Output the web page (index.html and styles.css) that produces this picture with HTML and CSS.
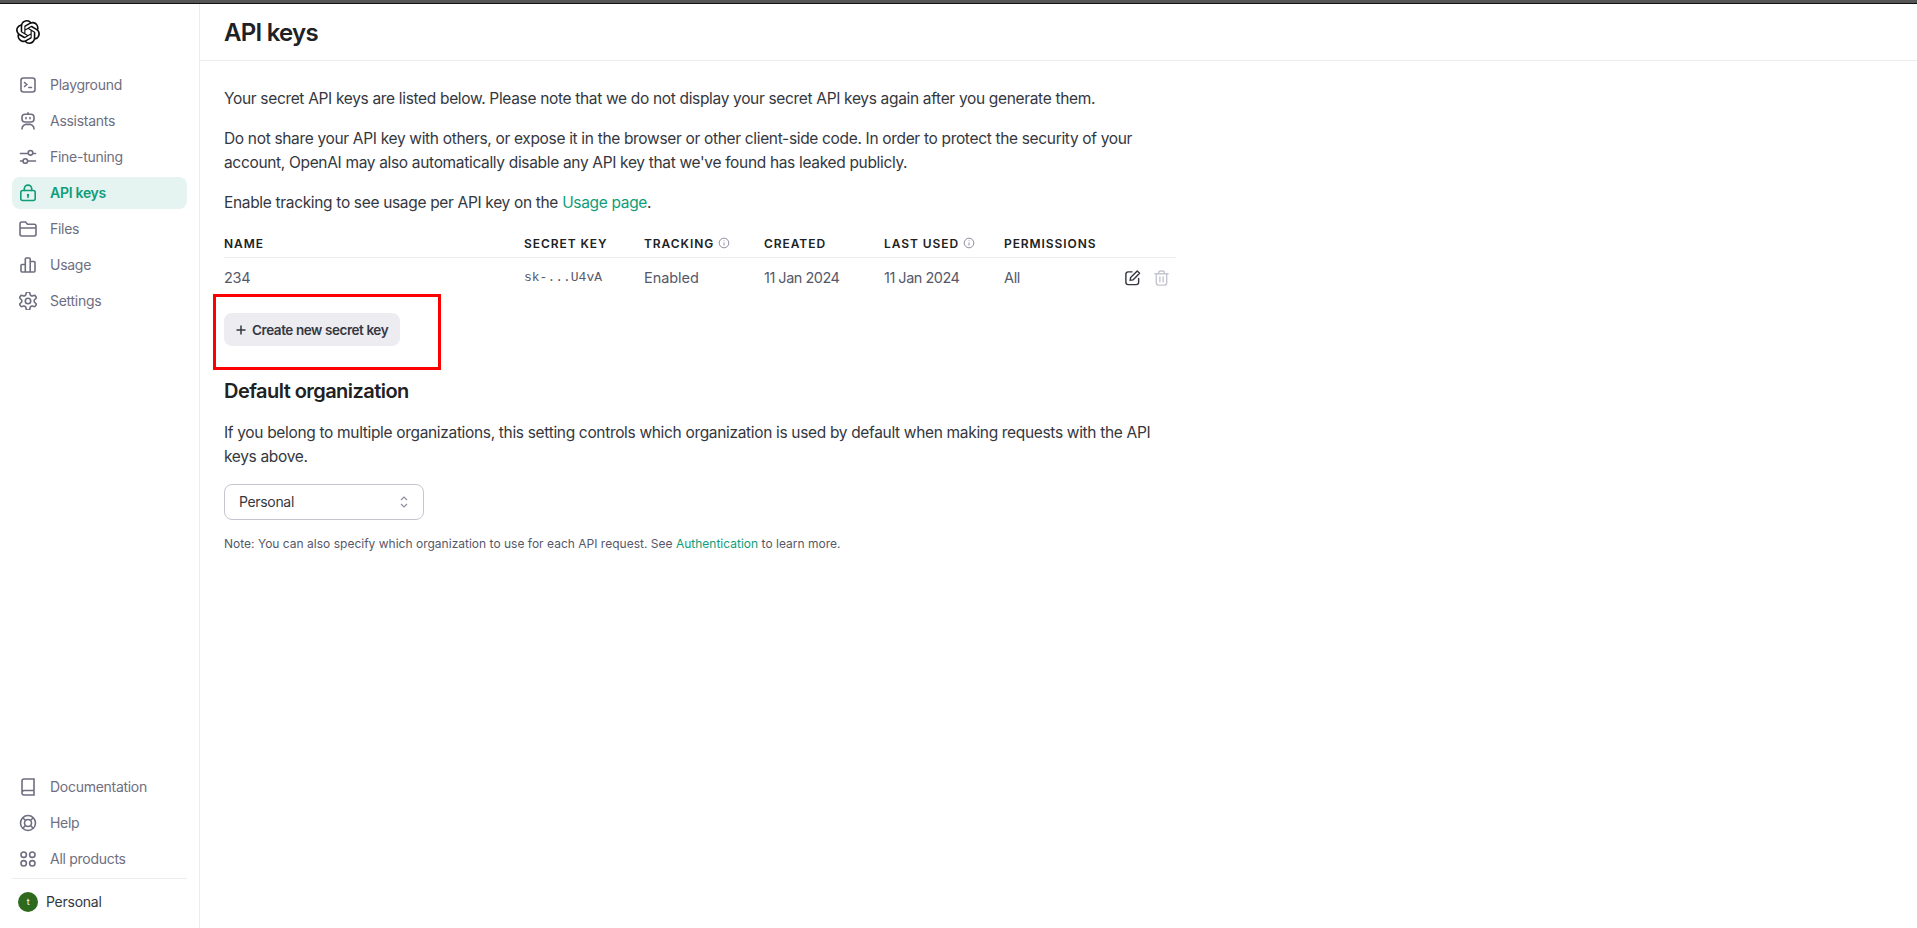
FILE: index.html
```html
<!DOCTYPE html>
<html lang="en">
<head>
    <meta charset="UTF-8">
    <title>API keys - OpenAI API</title>
    <link rel="stylesheet" href="styles.css">
</head>
<body>

<div class="topline"></div>

<div class="app">
    <aside class="sidebar">
        <div class="logo">
            <svg width="24" height="24" viewBox="0 0 24 24" fill="#0d0d0d"><path d="M22.2819 9.8211a5.9847 5.9847 0 0 0-.5157-4.9108 6.0462 6.0462 0 0 0-6.5098-2.9A6.0651 6.0651 0 0 0 4.9807 4.1818a5.9847 5.9847 0 0 0-3.9977 2.9 6.0462 6.0462 0 0 0 .7427 7.0966 5.98 5.98 0 0 0 .511 4.9107 6.051 6.051 0 0 0 6.5146 2.9001A5.9847 5.9847 0 0 0 13.2599 24a6.0557 6.0557 0 0 0 5.7718-4.2058 5.9894 5.9894 0 0 0 3.9977-2.9001 6.0557 6.0557 0 0 0-.7475-7.0729zm-9.022 12.6081a4.4755 4.4755 0 0 1-2.8764-1.0408l.1419-.0804 4.7783-2.7582a.7948.7948 0 0 0 .3927-.6813v-6.7369l2.02 1.1686a.071.071 0 0 1 .038.052v5.5826a4.504 4.504 0 0 1-4.4945 4.4944zm-9.6607-4.1254a4.4708 4.4708 0 0 1-.5346-3.0137l.142.0852 4.783 2.7582a.7712.7712 0 0 0 .7806 0l5.8428-3.3685v2.3324a.0804.0804 0 0 1-.0332.0615L9.74 19.9502a4.4992 4.4992 0 0 1-6.1408-1.6464zM2.3408 7.8956a4.485 4.485 0 0 1 2.3655-1.9728V11.6a.7664.7664 0 0 0 .3879.6765l5.8144 3.3543-2.0201 1.1685a.0757.0757 0 0 1-.071 0l-4.8303-2.7865A4.504 4.504 0 0 1 2.3408 7.872zm16.5963 3.8558L13.1038 8.364 15.1192 7.2a.0757.0757 0 0 1 .071 0l4.8303 2.7913a4.4944 4.4944 0 0 1-.6765 8.1042v-5.6772a.79.79 0 0 0-.407-.667zm2.0107-3.0231l-.142-.0852-4.7735-2.7818a.7759.7759 0 0 0-.7854 0L9.409 9.2297V6.8974a.0662.0662 0 0 1 .0284-.0615l4.8303-2.7866a4.4992 4.4992 0 0 1 6.6802 4.66zM8.3065 12.863l-2.02-1.1638a.0804.0804 0 0 1-.038-.0567V6.0742a4.4992 4.4992 0 0 1 7.3757-3.4537l-.142.0805L8.704 5.459a.7948.7948 0 0 0-.3927.6813zm1.0976-2.3654l2.602-1.4998 2.6069 1.4998v2.9994l-2.5974 1.4997-2.6067-1.4997Z"/></svg>
        </div>

        <nav class="nav">
            <a class="nav-item" href="#">
                <svg class="nav-icon" viewBox="0 0 18 18"><rect x="2" y="2" width="14" height="14" rx="2.5"/><path d="M5.5 6.5 7.800 8.500 5.500 10.500M9.800 11.500h2.700"/></svg>
                Playground
            </a>
            <a class="nav-item" href="#">
                <svg class="nav-icon" viewBox="0 0 18 18"><path d="M9 .8v1.400"/><rect x="3" y="2.200" width="12" height="7.800" rx="3"/><path d="M3 17c0-2.500 1.500-4 3.500-4.600M15 17c0-2.500-1.500-4-3.500-4.600M6.500 12.400h5"/><path d="M7 5.500v1.200M11 5.500v1.200"/></svg>
                Assistants
            </a>
            <a class="nav-item" href="#">
                <svg class="nav-icon" viewBox="0 0 18 18"><path d="M1.500 5.500h7.500M14 5.500h2.500M1.500 13h2.500M9 13h7.500"/><circle cx="11.500" cy="4.800" r="2.300"/><circle cx="6.300" cy="13" r="2.300"/></svg>
                Fine-tuning
            </a>
            <a class="nav-item active" href="#">
                <svg class="nav-icon" viewBox="0 0 18 18"><rect x="1.800" y="6.500" width="14.400" height="10" rx="2"/><path d="M5.300 6.500V4.800a3.700 3.700 0 0 1 7.400 0v1.700"/><circle class="fill" cx="9" cy="11" r="1.200"/><path d="M9 11v2.500"/></svg>
                API keys
            </a>
            <a class="nav-item" href="#">
                <svg class="nav-icon" viewBox="0 0 18 18"><path d="M1 4c0-1.100.8-2 1.800-2h3.700l2 2.300h6.700c1 0 1.800.8 1.800 1.800v8c0 1-.8 1.900-1.800 1.900H2.800c-1 0-1.800-.9-1.800-1.900zM1 8h16"/></svg>
                Files
            </a>
            <a class="nav-item" href="#">
                <svg class="nav-icon" viewBox="0 0 18 18"><path d="M2 15V9.500c0-.6.400-1 1-1h3.300V16H3c-.6 0-1-.4-1-1zM6.300 16V3c0-.6.400-1 1-1h2.900c.6 0 1 .4 1 1v13zM11.200 5.500H15c.6 0 1 .4 1 1V15c0 .6-.4 1-1 1h-3.800z"/></svg>
                Usage
            </a>
            <a class="nav-item" href="#">
                <svg class="nav-icon gear" viewBox="2 2 20 20"><path d="M12.220 2h-.44a2 2 0 0 0-2 2v.18a2 2 0 0 1-1 1.730l-.43.25a2 2 0 0 1-2 0l-.15-.08a2 2 0 0 0-2.730.73l-.22.38a2 2 0 0 0 .73 2.730l.15.1a2 2 0 0 1 1 1.720v.51a2 2 0 0 1-1 1.740l-.15.09a2 2 0 0 0-.73 2.730l.22.38a2 2 0 0 0 2.730.73l.15-.08a2 2 0 0 1 2 0l.43.25a2 2 0 0 1 1 1.730V20a2 2 0 0 0 2 2h.44a2 2 0 0 0 2-2v-.18a2 2 0 0 1 1-1.730l.43-.25a2 2 0 0 1 2 0l.15.08a2 2 0 0 0 2.730-.73l.22-.39a2 2 0 0 0-.73-2.730l-.15-.08a2 2 0 0 1-1-1.740v-.5a2 2 0 0 1 1-1.740l.15-.09a2 2 0 0 0 .73-2.730l-.22-.38a2 2 0 0 0-2.730-.73l-.15.08a2 2 0 0 1-2 0l-.43-.25a2 2 0 0 1-1-1.730V4a2 2 0 0 0-2-2z"/><circle cx="12" cy="12" r="3"/></svg>
                Settings
            </a>
        </nav>

        <nav class="nav nav-bottom">
            <a class="nav-item" href="#">
                <svg class="nav-icon" viewBox="0 0 18 18"><path d="M3 14.500V3a2 2 0 0 1 2-2h10v16H5a2 2 0 0 1-2-2.500zM3 14.500a2 2 0 0 1 2-2h10"/></svg>
                Documentation
            </a>
            <a class="nav-item" href="#">
                <svg class="nav-icon" viewBox="0 0 18 18"><circle cx="9" cy="9" r="7.500"/><circle cx="9" cy="9" r="3.500"/><path d="M3.800 3.800l2.700 2.700M14.200 3.800l-2.700 2.700M3.800 14.200l2.700-2.700M14.200 14.200l-2.700-2.700"/></svg>
                Help
            </a>
            <a class="nav-item" href="#">
                <svg class="nav-icon" viewBox="0 0 18 18"><circle cx="4.700" cy="4.700" r="2.700"/><circle cx="13.300" cy="4.700" r="2.700"/><circle cx="4.700" cy="13.300" r="2.700"/><circle cx="13.300" cy="13.300" r="2.700"/></svg>
                All products
            </a>
        </nav>

        <div class="account">
            <span class="avatar">t</span>
            Personal
        </div>
    </aside>

    <main class="main">
        <header class="page-header">
            <h1>API keys</h1>
        </header>

        <div class="content">
            <p>Your secret API keys are listed below. Please note that we do not display your secret API keys again after you generate them.</p>
            <p>Do not share your API key with others, or expose it in the browser or other client-side code. In order to protect the security of your account, OpenAI may also automatically disable any API key that we've found has leaked publicly.</p>
            <p>Enable tracking to see usage per API key on the <a class="link" href="#">Usage page</a>.</p>

            <table class="keys">
                <thead>
                    <tr>
                        <th class="col-name">Name</th>
                        <th class="col-std">Secret key</th>
                        <th class="col-std">Tracking <svg class="info" viewBox="0 0 12 12"><circle cx="6" cy="6" r="4.800"/><path d="M6 5.500v3M6 3.400v.8"/></svg></th>
                        <th class="col-std">Created</th>
                        <th class="col-std">Last used <svg class="info" viewBox="0 0 12 12"><circle cx="6" cy="6" r="4.800"/><path d="M6 5.500v3M6 3.400v.8"/></svg></th>
                        <th class="col-std">Permissions</th>
                        <th class="col-actions"></th>
                    </tr>
                </thead>
                <tbody>
                    <tr>
                        <td>234</td>
                        <td class="mono">sk-...U4vA</td>
                        <td class="status">Enabled</td>
                        <td class="date">11 Jan 2024</td>
                        <td class="date">11 Jan 2024</td>
                        <td>All</td>
                        <td>
                            <div class="actions">
                                <svg class="edit" viewBox="0 0 18 18"><path d="M8.500 2.500H4.500c-1.400 0-2.500 1.100-2.500 2.500v8.500C2 14.900 3.100 16 4.500 16H13c1.400 0 2.500-1.100 2.500-2.500V9.500"/><path d="M6.500 11.500l.5-3L14 1.500l2.500 2.500-7 7z" stroke-linejoin="round"/></svg>
                                <svg class="trash" viewBox="0 0 18 18"><path d="M2 4.500h14M6 4.500V3.500c0-1.200.8-2 2-2h2c1.200 0 2 .8 2 2v1M3.500 4.500v9.500c0 1.500 1 2.500 2.500 2.500h6c1.500 0 2.500-1 2.500-2.500V4.500M7.300 8v5M10.700 8v5"/></svg>
                            </div>
                        </td>
                    </tr>
                </tbody>
            </table>

            <div class="create-wrap">
                <button class="create-btn"><svg class="plus" viewBox="0 0 12 12"><path d="M6 1.500v9M1.500 6h9"/></svg>Create new secret key</button>
                <div class="red-box"></div>
            </div>

            <h2>Default organization</h2>
            <p>If you belong to multiple organizations, this setting controls which organization is used by default when making requests with the API keys above.</p>

            <div class="org-select">
                Personal
                <svg class="chevrons" viewBox="0 0 10 16"><path d="M2 6l3-3 3 3M2 10l3 3 3-3"/></svg>
            </div>

            <p class="note">Note: You can also specify which organization to use for each API request. See <a class="link" href="#">Authentication</a> to learn more.</p>
        </div>
    </main>
</div>

</body>
</html>
```

FILE: styles.css
```css
* {
    box-sizing: border-box;
}
body {
    font-family: 'Inter', 'Liberation Sans', sans-serif;
    margin: 0;
    padding: 0;
    background-color: #ffffff;
    color: #353740;
    font-size: 15.5px;
    line-height: 24px;
}
.topline {
    height: 4px;
    background-color: #555555;
    border-bottom: 1px solid #111111;
}
.app {
    display: flex;
    height: 924px;
}

/* barra lateral */
.sidebar {
    width: 200px;
    flex-shrink: 0;
    border-right: 1px solid #ececf1;
    padding: 0 12px;
    display: flex;
    flex-direction: column;
}
.logo {
    height: 65px;
    padding: 16px 4px 0;
}
.nav-bottom {
    margin-top: auto;
    margin-bottom: -1px;
}
.nav-item {
    display: flex;
    align-items: center;
    gap: 13px;
    height: 32px;
    margin-bottom: 4px;
    padding: 0 7px;
    border-radius: 8px;
    color: #6e6e80;
    font-size: 14px;
    letter-spacing: -0.28px;
    text-decoration: none;
}
.nav-item.active {
    background-color: #e5f3f1;
    color: #0f9d7a;
    font-weight: 600;
}
.nav-icon {
    width: 18px;
    height: 18px;
    flex-shrink: 0;
    fill: none;
    stroke: currentColor;
    stroke-width: 1.6;
    stroke-linecap: round;
}
.nav-icon.gear {
    stroke-width: 1.8;
}
.nav-icon .fill {
    fill: currentColor;
    stroke: none;
}
.account {
    display: flex;
    align-items: center;
    gap: 8px;
    height: 50px;
    padding: 0 6px 4px;
    border-top: 1px solid #ececf1;
    font-size: 14px;
    letter-spacing: -0.25px;
}
.avatar {
    width: 20px;
    height: 20px;
    border-radius: 50%;
    background-color: #2e6a1d;
    color: #ffffff;
    font-size: 9px;
    line-height: 20px;
    text-align: center;
}

/* conteudo */
.main {
    flex: 1;
}
.page-header {
    height: 57px;
    padding: 0 24px;
    border-bottom: 1px solid #ececf1;
}
h1 {
    margin: 0;
    font-size: 24px;
    line-height: 58px;
    font-weight: 600;
    letter-spacing: -0.75px;
    color: #202123;
}
.content {
    width: 976px;
    padding: 26px 0 0 24px;
    letter-spacing: -0.33px;
}
p {
    margin: 0 0 16px;
}
.link {
    color: #0f9d7a;
    text-decoration: none;
}

/* tabela */
.keys {
    border-collapse: collapse;
    table-layout: fixed;
    width: 952px;
    margin-top: -2px;
}
.keys th {
    height: 28px;
    padding: 2px 0 0;
    text-align: left;
    font-size: 12px;
    font-weight: 600;
    letter-spacing: 0.93px;
    text-transform: uppercase;
    color: #202123;
    border-bottom: 1px solid #ececf1;
}
.keys td {
    height: 41px;
    padding: 0;
    font-size: 14.5px;
    color: #565869;
}
.keys td.status {
    letter-spacing: -0.05px;
}
.keys td.date {
    letter-spacing: -0.5px;
}
.col-name {
    width: 300px;
}
.col-std {
    width: 120px;
}
.info {
    width: 12px;
    height: 12px;
    vertical-align: -1px;
    fill: none;
    stroke: #8e8ea0;
    stroke-width: 1;
}
.keys td.mono {
    font-family: 'Liberation Mono', monospace;
    font-size: 13px;
    letter-spacing: 0;
}
.actions {
    display: flex;
    justify-content: flex-end;
    gap: 12px;
    padding-right: 6px;
}
.edit, .trash {
    width: 18px;
    height: 18px;
    fill: none;
    stroke-width: 1.5;
    stroke-linecap: round;
}
.edit {
    stroke: #353740;
}
.trash {
    stroke: #c5c5d2;
}

/* botao */
.create-wrap {
    position: relative;
    margin-top: 15px;
    height: 33px;
}
.create-btn {
    display: flex;
    align-items: center;
    gap: 5px;
    height: 33px;
    padding: 0 12px 0 11px;
    border: none;
    border-radius: 8px;
    background-color: #ececf1;
    color: #353740;
    font-family: inherit;
    font-size: 13.5px;
    font-weight: 600;
    letter-spacing: -0.43px;
}
.plus {
    width: 12px;
    height: 12px;
    fill: none;
    stroke: #353740;
    stroke-width: 1.5;
}
.red-box {
    position: absolute;
    left: -11px;
    top: -19px;
    width: 228px;
    height: 76px;
    border: 3px solid #ff0000;
}

h2 {
    margin: 30px 0 15px;
    font-size: 20px;
    line-height: 30px;
    font-weight: 600;
    letter-spacing: -0.55px;
    color: #202123;
}
.org-select {
    display: flex;
    align-items: center;
    justify-content: space-between;
    width: 200px;
    height: 36px;
    margin-top: -1px;
    padding: 0 14px;
    border: 1px solid #c5c5d2;
    border-radius: 8px;
    font-size: 14px;
}
.chevrons {
    width: 10px;
    height: 16px;
    fill: none;
    stroke: #8e8ea0;
    stroke-width: 1.2;
}
.note {
    margin-top: 15px;
    font-size: 12px;
    line-height: 18px;
    color: #565869;
    letter-spacing: 0.01px;
}
```
